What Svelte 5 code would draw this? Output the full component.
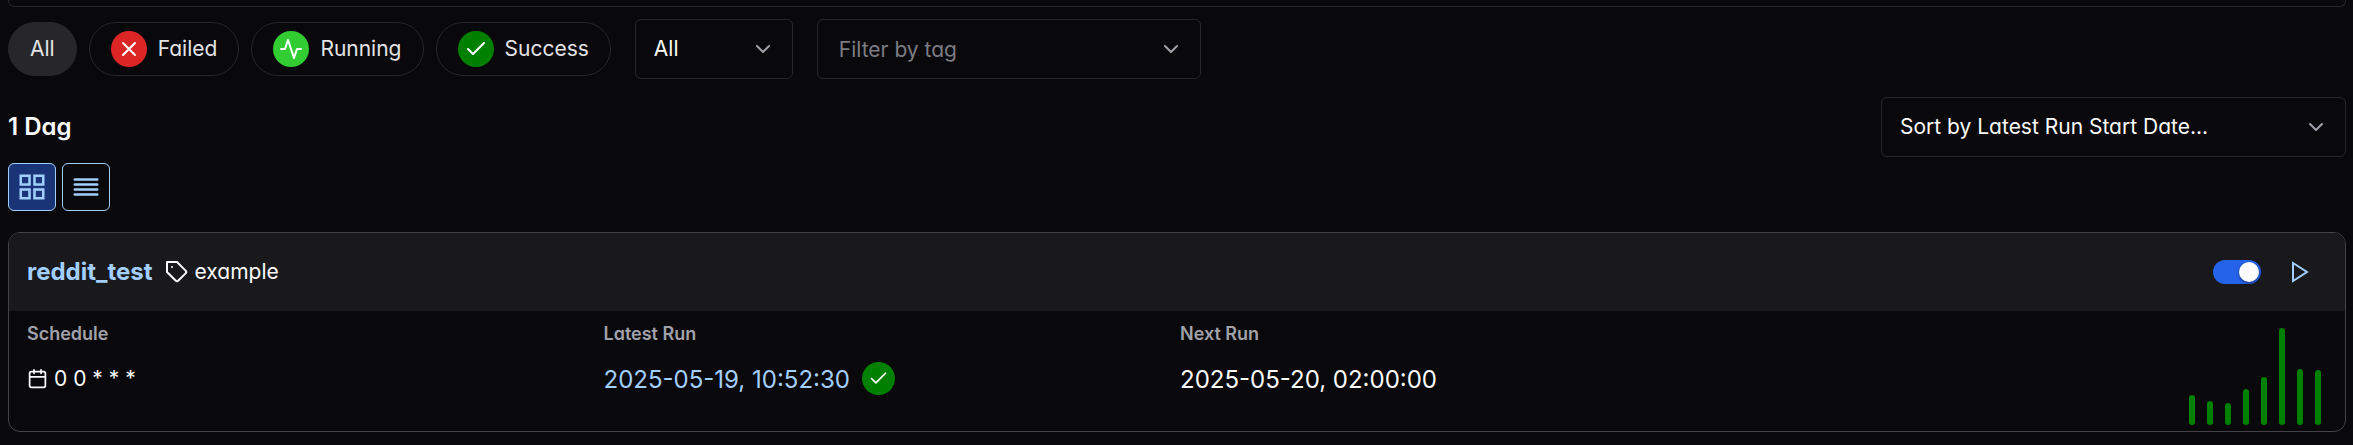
<script>
  const filters = [
    { label: 'All', state: null },
    { label: 'Failed', state: 'failed' },
    { label: 'Running', state: 'running' },
    { label: 'Success', state: 'success' }
  ];
  const runs = [30, 24, 22, 36, 48, 97, 56, 55];
  let active = $state('All');
  let view = $state('card');
  let enabled = $state(true);
</script>

{#snippet chevron()}
  <svg class="chevron" viewBox="0 0 24 24" aria-hidden="true"><path d="m6 9 6 6 6-6" /></svg>
{/snippet}

{#snippet stateIcon(state)}
  <span class="state {state}">
    <svg viewBox="0 0 24 24" aria-hidden="true">
      {#if state === 'failed'}
        <path d="M18 6 6 18M6 6l12 12" />
      {:else if state === 'running'}
        <path d="M22 12h-4l-3 9L9 3l-3 9H2" />
      {:else}
        <path d="M20 6 9 17l-5-5" />
      {/if}
    </svg>
  </span>
{/snippet}

<main>
  <div class="search"></div>

  <div class="filters">
    <div class="pills">
      {#each filters as f}
        <button class="pill" class:active={active === f.label} onclick={() => (active = f.label)}>
          {#if f.state}{@render stateIcon(f.state)}{/if}
          {f.label}
        </button>
      {/each}
    </div>
    <div class="field paused">
      <select aria-label="Paused state"><option>All</option><option>Active</option><option>Paused</option></select>
      {@render chevron()}
    </div>
    <div class="field tag-filter">
      <input type="text" placeholder="Filter by tag" aria-label="Filter by tag" />
      {@render chevron()}
    </div>
  </div>

  <div class="summary">
    <h1>1 Dag</h1>
    <div class="field sort">
      <select aria-label="Sort Dags"><option>Sort by Latest Run Start Date...</option></select>
      {@render chevron()}
    </div>
  </div>

  <div class="views">
    <button class="view" class:on={view === 'card'} aria-label="Card view" onclick={() => (view = 'card')}>
      <svg viewBox="0 0 24 24" aria-hidden="true">
        <path d="M3 3h7v7H3zM14 3h7v7h-7zM14 14h7v7h-7zM3 14h7v7H3z" />
      </svg>
    </button>
    <button class="view" class:on={view === 'table'} aria-label="Table view" onclick={() => (view = 'table')}>
      <svg viewBox="0 0 24 24" aria-hidden="true"><path d="M3 6h18M3 10h18M3 14h18M3 18h18" /></svg>
    </button>
  </div>

  <article class="card">
    <header>
      <a class="name" href="#reddit_test">reddit_test</a>
      <span class="tags">
        <svg viewBox="0 0 24 24" aria-hidden="true">
          <path d="M20.59 13.41l-7.17 7.17a2 2 0 0 1-2.83 0L2 12V2h10l8.59 8.59a2 2 0 0 1 0 2.82zM7 7h.01" />
        </svg>
        example
      </span>
      <label class="switch">
        <input type="checkbox" role="switch" aria-label="Dag enabled" bind:checked={enabled} />
        <span class="thumb"></span>
      </label>
      <button class="play" aria-label="Trigger Dag">
        <svg viewBox="0 0 24 24" aria-hidden="true"><path d="m5 3 14 9-14 9z" /></svg>
      </button>
    </header>
    <div class="body">
      <section>
        <h2>Schedule</h2>
        <p class="schedule">
          <svg viewBox="0 0 24 24" aria-hidden="true">
            <path d="M5 4h14a2 2 0 0 1 2 2v14a2 2 0 0 1-2 2H5a2 2 0 0 1-2-2V6a2 2 0 0 1 2-2zM16 2v4M8 2v4M3 10h18" />
          </svg>
          <span>0 0 * * *</span>
        </p>
      </section>
      <section>
        <h2>Latest Run</h2>
        <p class="date latest">
          <a href="#latest-run">2025-05-19, 10:52:30</a>
          {@render stateIcon('success')}
        </p>
      </section>
      <section>
        <h2>Next Run</h2>
        <p class="date">2025-05-20, 02:00:00</p>
      </section>
      <div class="bars">
        {#each runs as height}
          <span class="bar" style="height: {height}px"></span>
        {/each}
      </div>
    </div>
  </article>
</main>

<style>
  :global(body) {
    margin: 0;
    background: #09090b;
  }
  main {
    padding: 0 7px 12px 8px;
    color: #fafafa;
    font: 21px/30px Inter, "Noto Sans", sans-serif;
    font-feature-settings: "cv11";
  }
  main * {
    box-sizing: border-box;
  }
  button, select, input {
    font: inherit;
    font-feature-settings: inherit;
    color: inherit;
    margin: 0;
  }
  a {
    color: #a3cfff;
    text-decoration: none;
  }
  h1, h2, p {
    margin: 0;
  }
  svg {
    display: block;
    flex: none;
    width: 24px;
    height: 24px;
    fill: none;
    stroke: currentColor;
    stroke-width: 2;
    stroke-linecap: round;
    stroke-linejoin: round;
  }
  .search {
    height: 7px;
    border: 1px solid #27272a;
    border-top: 0;
    border-radius: 0 0 6px 6px;
  }
  .filters {
    display: flex;
    align-items: center;
    gap: 24px;
    margin-top: 12px;
  }
  .pills {
    display: flex;
    gap: 12px;
  }
  .pill {
    display: flex;
    align-items: center;
    gap: 11px;
    height: 54px;
    padding: 0 21px;
    border: 1px solid #27272a;
    border-radius: 27px;
    background: none;
    color: #e4e4e7;
  }
  .pill.active {
    background: #27272a;
  }
  .state {
    display: grid;
    place-items: center;
    flex: none;
    width: 36px;
    height: 36px;
    border-radius: 50%;
    color: #fff;
  }
  .failed { background: #dc2626; }
  .running { background: #32cd32; }
  .success { background: #008000; }
  .field {
    display: grid;
    align-items: center;
    height: 60px;
  }
  .field > :global(*) {
    grid-area: 1 / 1;
  }
  .field select, .field input {
    appearance: none;
    width: 100%;
    height: 100%;
    padding: 0 60px 0 18px;
    border: 1px solid #27272a;
    border-radius: 6px;
    background: none;
    outline: none;
  }
  .field input {
    padding-left: 21px;
  }
  .field input::placeholder {
    color: #7c7c83;
    opacity: 1;
  }
  .chevron {
    justify-self: end;
    margin-right: 18px;
    color: #a1a1aa;
    pointer-events: none;
  }
  .paused { width: 158px; }
  .tag-filter { width: 384px; }
  .sort { width: 465px; }
  .summary {
    display: flex;
    align-items: center;
    justify-content: space-between;
    margin-top: 18px;
  }
  h1 {
    font-size: 24px;
    font-weight: 600;
    font-optical-sizing: none;
  }
  .views {
    display: flex;
    gap: 6px;
    margin-top: 6px;
  }
  .view {
    display: grid;
    place-items: center;
    width: 48px;
    height: 48px;
    padding: 0;
    border: 1px solid #a3cfff;
    border-radius: 6px;
    background: none;
    color: #a3cfff;
  }
  .view.on {
    background: #1a3478;
  }
  .view svg {
    width: 30px;
    height: 30px;
    stroke-linejoin: miter;
  }
  .card {
    margin-top: 21px;
    border: 1px solid #434347;
    border-radius: 12px;
    overflow: hidden;
  }
  header {
    display: flex;
    align-items: center;
    height: 78px;
    padding: 0 18px;
    background: #19191b;
  }
  .name {
    font-size: 24px;
    font-weight: 700;
    font-optical-sizing: none;
  }
  .tags {
    display: flex;
    align-items: center;
    gap: 6px;
    margin: 0 auto 0 12px;
  }
  .switch {
    display: flex;
    align-items: center;
    width: 48px;
    height: 24px;
    padding: 2px;
    border-radius: 12px;
    background: #3f3f46;
  }
  .switch:has(input:checked) {
    justify-content: flex-end;
    background: #2563eb;
  }
  .switch input {
    appearance: none;
    width: 0;
    height: 0;
    margin: 0;
  }
  .thumb {
    width: 20px;
    height: 20px;
    border-radius: 50%;
    background: #fff;
    box-shadow: 0 1px 3px #0008;
  }
  .play {
    display: grid;
    place-items: center;
    width: 54px;
    height: 54px;
    margin-left: 12px;
    padding: 0;
    border: 0;
    background: none;
    color: #a3cfff;
  }
  .play svg {
    stroke-linejoin: miter;
  }
  .body {
    display: grid;
    grid-template-columns: repeat(4, 1fr);
    gap: 6px;
    height: 120px;
    padding: 0 18px 6px;
  }
  section {
    display: flex;
    flex-direction: column;
    gap: 15px;
    padding-top: 9px;
  }
  h2 {
    color: #a1a1aa;
    font-size: 18px;
    line-height: 27px;
    font-weight: 600;
  }
  .schedule {
    display: flex;
    align-items: center;
    gap: 6px;
    line-height: 33px;
  }
  .schedule svg {
    width: 21px;
    height: 21px;
  }
  .date {
    font-size: 24px;
    line-height: 36px;
  }
  .latest {
    display: flex;
    align-items: flex-start;
    gap: 12px;
  }
  .latest .state {
    width: 33px;
    height: 33px;
  }
  .latest svg {
    width: 21px;
    height: 21px;
  }
  .bars {
    display: flex;
    align-items: flex-end;
    justify-content: flex-end;
    gap: 12px;
    padding-right: 6px;
  }
  .bar {
    width: 6px;
    border-radius: 3px;
    background: #008000;
  }
</style>
